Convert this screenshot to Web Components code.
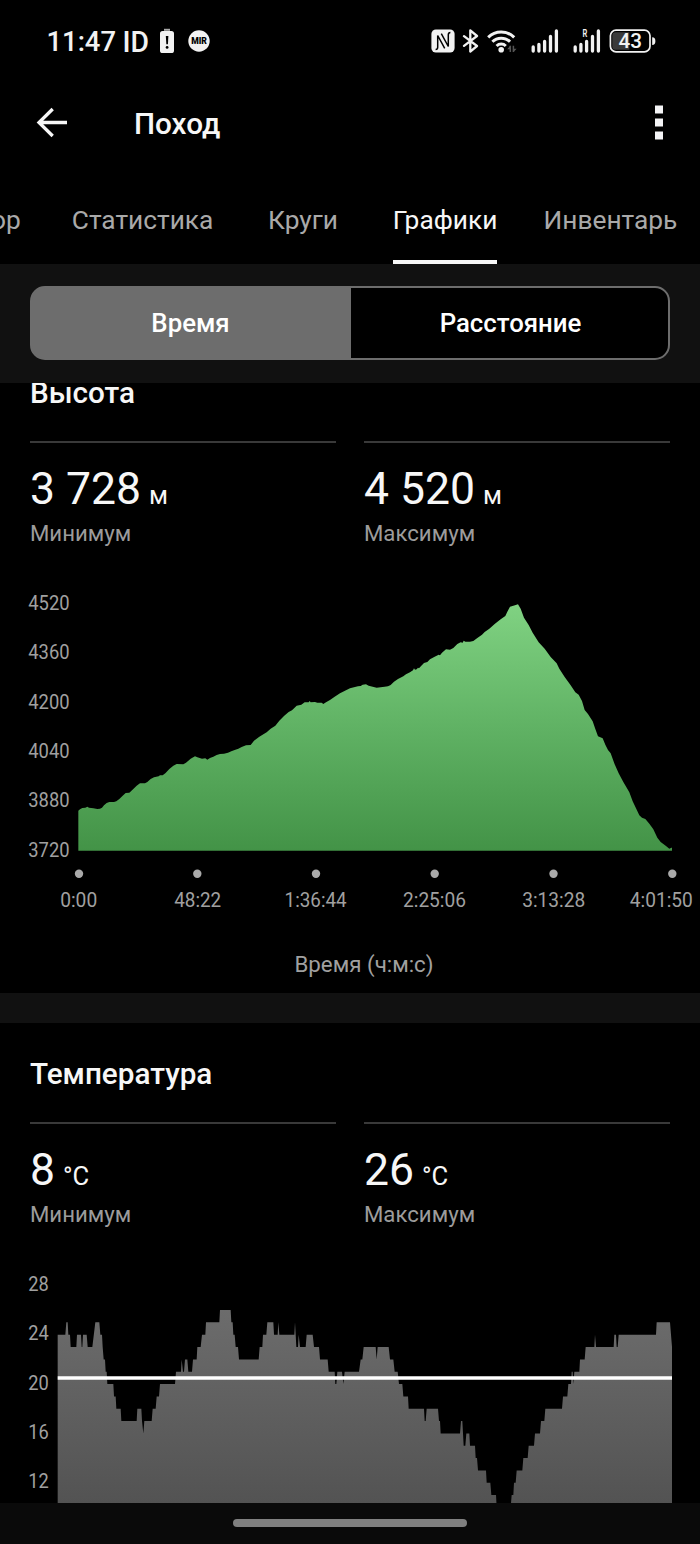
<!DOCTYPE html>
<html lang="ru">
<head>
<meta charset="utf-8">
<title>Поход</title>
<style>
html, body{ margin:0; background:#000; }
body{ font-family:Roboto, "Noto Sans", sans-serif; color:#f7f7f7; }
</style>
</head>
<body>
<hike-app></hike-app>

<script>
const ICONS = {
  alert: [16, 26, `<path d="M5 0.8h6v2H5z" fill="#aaa"/><rect x="1" y="3" width="14" height="22" rx="2.6" fill="#f2f2f2"/><path d="M6.800 8h2.600l-.5 8.300H7.300z"/><circle cx="8.100" cy="19.400" r="1.400"/>`],
  mir: [22, 22, `<circle cx="11" cy="11" r="10.7" fill="#f2f2f2"/><text x="3.200" y="14" font-family="Roboto,sans-serif" font-size="8.600" font-weight="900" textLength="15.800" lengthAdjust="spacingAndGlyphs" fill="#000">MIR</text>`],
  nfc: [24, 24, `<rect x=".4" y=".4" width="23.2" height="23.2" rx="4.500" fill="#f2f2f2"/><path d="M4.600 20.500c1.500 0 2.100-.8 2.100-2.300V6.500l7 12.800M19.400 3.500c-1.500 0-2.100.8-2.100 2.300v11.700L10.300 4.700" fill="none" stroke="#000" stroke-width="1.500"/>`],
  bluetooth: [18, 24, `<path d="M2 7.200 15 17l-6.700 5.600V1.400L15 7 2 16.800" fill="none" stroke="#f2f2f2" stroke-width="2.300" stroke-linejoin="round" stroke-linecap="round"/>`],
  wifi: [30, 24, `<g fill="none" stroke="#f2f2f2" stroke-width="3"><path d="M1.200 8.400a18.300 18.300 0 0 1 26 0"/><path d="M5.400 12.800a12.400 12.400 0 0 1 17.600 0"/><path d="M9.600 17a6.500 6.500 0 0 1 9.200 0"/></g><circle cx="14.200" cy="20.800" r="2.800" fill="#f2f2f2"/><path d="M23.300 16.800v6.200M26.400 23v-6.200" stroke="#555" stroke-width="1.500"/><path d="M20.200 20.200l3.100-3.600v3.600zM26.400 23.200v-3.400h3.200z" fill="#555"/>`],
  signal: [28, 24, `<path d="M2.200 22v-4M7.900 22v-6.500M13.600 22v-9.500M19.500 22V7.500M25.400 22V2" stroke="#f2f2f2" stroke-width="3.300" stroke-linecap="round"/>`],
  roaming: [28, 24, `<path d="M2.200 22v-4M7.900 22v-6.500M13.600 22v-9.500M19.500 22V7.500M25.400 22V2" stroke="#f2f2f2" stroke-width="3.300" stroke-linecap="round"/><text x="9.500" y="7.500" font-family="Roboto,sans-serif" font-size="10" font-weight="600" textLength="4.800" lengthAdjust="spacingAndGlyphs" fill="#f2f2f2">R</text>`],
  battery: [48, 24, `<rect x="1.400" y="1.200" width="39.600" height="21.600" rx="5.600" fill="none" stroke="#f2f2f2" stroke-width="1.700"/><path d="M6.500 3.200h13.800v17.600H6.500a3.200 3.200 0 0 1-3.200-3.200V6.400a3.200 3.200 0 0 1 3.200-3.200z" fill="#3a3a3a"/><path d="M43.200 8.200c2.200 0 3.200 1.200 3.200 3.900s-1 3.900-3.200 3.900z" fill="#f2f2f2"/><text x="9.600" y="19.200" font-family="Roboto,sans-serif" font-size="20.500" font-weight="500" textLength="23.500" lengthAdjust="spacingAndGlyphs" fill="#f2f2f2">43</text>`],
  back: [32, 32, `<path d="M31 15.500H3.500M16.700 2 3 15.500l13.700 13.500" fill="none" stroke="#f7f7f7" stroke-width="3.300"/>`],
  more: [8, 36, `<path d="M0 .5h8v8H0zM0 13.500h8v8H0zM0 26.500h8v8H0z" fill="#f4f4f6"/>`]
};

customElements.define("app-icon", class extends HTMLElement {
  constructor(){
    super();
    this.attachShadow({mode:"open"});
  }
  connectedCallback(){
    const [w, h, body] = ICONS[this.getAttribute("name")];
    this.shadowRoot.innerHTML = `
    <style>
      :host{ display:block; flex:none; }
      svg{ display:block; }
    </style>
    <svg width="${w}" height="${h}" viewBox="0 0 ${w} ${h}">${body}</svg>`;
  }
});

customElements.define("status-bar", class extends HTMLElement {
  constructor(){
    super();
    this.attachShadow({mode:"open"}).innerHTML = `
    <style>
      :host{ display:flex; align-items:center; justify-content:space-between; height:81px; box-sizing:border-box; padding:0 43px 0 46px; }
      div{ display:flex; align-items:center; }
      svg{ display:block; }
    </style>
    <div>
      <svg width="104" height="40" font-family="Roboto,sans-serif" fill="#f2f2f2">
        <text x=".5" y="29.500" font-size="27.500" font-weight="500" textLength="69.500" lengthAdjust="spacingAndGlyphs">11:47</text>
        <text x="76.500" y="30.500" font-size="29.500" font-weight="500" textLength="26.500" lengthAdjust="spacingAndGlyphs">ID</text>
      </svg>
      <app-icon name="alert" style="margin-left:8.500px"></app-icon>
      <app-icon name="mir" style="margin-left:13px"></app-icon>
    </div>
    <div>
      <app-icon name="nfc"></app-icon>
      <app-icon name="bluetooth" style="margin-left:6.500px"></app-icon>
      <app-icon name="wifi" style="margin-left:7px"></app-icon>
      <app-icon name="signal" style="margin-left:14px"></app-icon>
      <app-icon name="roaming" style="margin-left:14px"></app-icon>
      <app-icon name="battery" style="margin-left:8.500px"></app-icon>
    </div>`;
  }
});

customElements.define("app-bar", class extends HTMLElement {
  constructor(){
    super();
    this.attachShadow({mode:"open"}).innerHTML = `
    <style>
      :host{ display:flex; align-items:center; height:83px; box-sizing:border-box; padding:0 37px 0 36px; }
      h1{ flex:1; margin:3px 0 0 66px; font-size:29.700px; font-weight:500; line-height:36px; }
    </style>
    <app-icon name="back"></app-icon>
    <h1><slot></slot></h1>
    <app-icon name="more"></app-icon>`;
  }
});

customElements.define("tab-item", class extends HTMLElement {
  constructor(){
    super();
    this.attachShadow({mode:"open"}).innerHTML = `
    <style>
      :host{ display:flex; flex:none; align-items:flex-start; box-sizing:border-box; height:99.500px; padding-top:38.500px; font-size:26.300px; line-height:34px; color:#a9a9a9; border-bottom:4.500px solid transparent; white-space:nowrap; }
      :host([active]){ color:#f7f7f7; border-color:#f7f7f7; }
    </style>
    <slot></slot>`;
  }
});

customElements.define("tab-strip", class extends HTMLElement {
  constructor(){
    super();
    this.attachShadow({mode:"open"}).innerHTML = `
    <style>
      :host{ display:flex; overflow:hidden; height:99.500px; }
      div{ display:flex; flex:none; margin-left:-55px; }
      ::slotted(*){ margin-right:54.700px; }
      ::slotted(:first-child){ margin-right:51px; }
      ::slotted([active]){ margin-right:46.200px; }
    </style>
    <div><slot></slot></div>`;
  }
});

customElements.define("segment-switch", class extends HTMLElement {
  constructor(){
    super();
    this.attachShadow({mode:"open"}).innerHTML = `
    <style>
      :host{ display:block; position:relative; z-index:1; box-sizing:border-box; height:119px; padding:22.500px 30px; background:#111; }
      div{ display:grid; grid-template-columns:319px 1fr; height:74px; box-sizing:border-box; border:2px solid #6d6d6d; border-radius:15px; overflow:hidden; background:linear-gradient(90deg, #6d6d6d 319px, #000 0); }
      span{ display:flex; align-items:center; justify-content:center; font-size:25.800px; font-weight:500; color:#fff; }
      span:first-child{ padding-right:2px; }
      span:last-child{ padding-left:2px; }
    </style>
    <div><span>${this.getAttribute("left")}</span><span>${this.getAttribute("right")}</span></div>`;
  }
});

customElements.define("stat-value", class extends HTMLElement {
  constructor(){
    super();
    this.attachShadow({mode:"open"});
  }
  connectedCallback(){
    this.shadowRoot.innerHTML = `
    <style>
      :host{ display:block; border-top:2px solid #393939; }
      .value{ margin-top:20px; font-size:44.500px; line-height:53px; white-space:pre; }
      .unit{ font-size:25.600px; margin-left:8px; }
      .label{ margin-top:-4.500px; font-size:22.200px; line-height:30px; color:#9c9c9c; }
    </style>
    <div class="value">${this.getAttribute("value")}<span class="unit">${this.getAttribute("unit")}</span></div>
    <div class="label"><slot></slot></div>`;
  }
});

customElements.define("chart-section", class extends HTMLElement {
  constructor(){
    super();
    this.attachShadow({mode:"open"}).innerHTML = `
    <style>
      :host{ display:flex; flex-direction:column; box-sizing:border-box; height:651px; background:#000; }
      h2{ margin:33px 30px 0; font-size:29.700px; line-height:36px; font-weight:500; }
      .stats{ display:grid; grid-template-columns:1fr 1fr; gap:28px; margin:30px 30px 0; height:131px; }
    </style>
    <h2>${this.getAttribute("heading")}</h2>
    <div class="stats"><slot name="stat"></slot></div>
    <slot></slot>`;
  }
});

// vertical axis labels, evenly spaced
const yAxis = (labels, width, y) => labels.map((t, i) =>
  `<text x="28.300" y="${y + i * 49.33}" textLength="${width}" lengthAdjust="spacingAndGlyphs">${t}</text>`).join("");

const CHART_STYLE = `
  :host{ display:block; }
  svg{ display:block; }
  text{ font-family:Roboto, sans-serif; font-size:20.300px; fill:#a0a0a0; }
  .title{ font-size:22.300px; text-anchor:middle; }
`;

// profile outline on a grid of thirds of a pixel
const PROFILE = `235,692 240,688 247,684 256,683 262,680 267,683 280,685 292,687 300,686 306,683 312,676 320,669 328,666 342,666 349,664 358,657 368,647 377,639 388,638 396,631 410,617 420,610 435,610 442,606 452,597 462,592 476,589 480,586 488,586 496,580 508,567 520,557 530,552 550,553 558,548 572,536 585,529 592,532 606,536 616,535 622,539 630,534 640,530 650,525 660,522 672,521 684,518 694,514 704,510 715,506 725,501 738,496 752,495 762,482 778,470 800,457 812,446 826,437 838,422 852,408 866,396 876,391 890,377 904,374 914,367 926,367 929,363 932,367 945,366 952,368 965,368 970,372 978,367 990,360 1004,350 1020,340 1035,332 1050,325
1062,322 1074,319 1082,318 1088,314 1098,313 1106,317 1118,320 1130,323 1142,322 1154,320 1164,319 1172,315 1182,305 1194,297 1210,289 1218,283 1230,277 1239,271 1242,265 1245,269 1250,268 1254,263 1257,265 1264,257 1272,249 1282,246 1290,238 1304,230 1316,224 1320,226 1326,218 1338,208 1350,209 1360,204 1372,192 1382,187 1388,188 1391,182 1396,185 1410,185 1420,183 1432,174 1446,164 1454,156 1468,146 1484,132 1502,118 1516,108 1522,95 1530,80 1545,76 1554,73 1562,86 1572,113 1586,135 1598,158 1616,187 1634,206 1652,231 1670,250 1678,266 1694,291 1712,316 1726,337 1736,344 1746,363 1754,390 1764,402 1778,424 1786,447 1794,469 1808,475 1816,494 1824,510 1832,520 1844,553 1856,580 1870,606 1888,637 1898,664 1918,706 1926,713 1936,717 1948,731 1960,748 1972,773 1982,786 1998,798 2008,806 2014,803 2016,803`;

customElements.define("altitude-chart", class extends HTMLElement {
  constructor(){
    super();
    const ticks = [[79, 37, "0:00"], [197.3, 47, "48:22"], [316, 62, "1:36:44"], [434.7, 63, "2:25:06"], [553.5, 63, "3:13:28"], [672.3, 63, "4:01:50"]];
    // the last label is pushed in from the right edge
    const labelX = [60.2, 174.2, 284.6, 403, 522.2, 629.8];
    this.attachShadow({mode:"open"}).innerHTML = `
    <style>${CHART_STYLE}</style>
    <svg width="700" height="421" viewBox="0 572 700 421">
      <defs><linearGradient id="g" x1="0" y1="0" x2="0" y2="1">
        <stop offset="0" stop-color="#80d282"/><stop offset=".5" stop-color="#60b264"/><stop offset="1" stop-color="#439347"/>
      </linearGradient></defs>
      ${yAxis([4520, 4360, 4200, 4040, 3880, 3720], 41.3, 610)}
      <polygon transform="translate(0 580) scale(.33333)" fill="url(#g)" points="235,812 ${PROFILE} 2016,812"/>
      ${ticks.map(([x, w, t], i) => `
        <circle cx="${x}" cy="873.800" r="4.200" fill="#aaa"/>
        <text x="${labelX[i]}" y="907.200" textLength="${w}" lengthAdjust="spacingAndGlyphs">${t}</text>`).join("")}
      <text class="title" x="364" y="972">Время (ч:м:с)</text>
    </svg>`;
  }
});

// x in thirds of a pixel, whole degrees
const TEMPS = `173,24 196,24 199,25 203,25 205,24 210,24 212,23 229,23 231,24 243,24 245,23 247,23 249,24 260,24 263,23 277,23 286,25 298,25 301,24 306,24 308,23 311,22 315,22 317,21 320,21 322,20 340,20 342,19 347,19 349,18 362,18 364,17 410,17 412,18 424,18 426,17 430,16 433,17 455,17 458,18 467,18 470,19 477,19 480,20 525,20 528,21 543,21 545,22 549,21 552,21 555,22 562,22 565,21 576,21 579,22 590,22 592,23 602,23 606,24 616,24 618,25 658,25 660,26 692,26 694,25 698,25 700,24 704,24 707,23 714,23 717,22 776,22 779,23 787,23 789,24 799,24 802,25 820,25 822,24 833,24 835,25 838,24 883,24 885,25 889,23 894,23 896,24 900,23 917,23 920,24 938,24 942,23 957,23 960,22 983,22 986,21 1004,21 1006,20 1009,20 1012,21 1026,21 1030,20 1034,21
1077,21 1082,22 1087,22 1091,23 1127,23 1130,22 1133,23 1166,23 1170,22 1180,22 1184,21 1193,21 1197,20 1207,20 1210,19 1224,19 1226,18 1272,18 1274,17 1277,17 1280,18 1314,18 1317,17 1320,17 1322,16 1380,16 1383,17 1387,17 1389,16 1391,15 1396,15 1399,16 1408,16 1410,15 1425,15 1427,14 1431,14 1434,13 1458,13 1460,12 1471,12 1474,11 1488,11 1490,10 1532,10 1535,11 1540,11 1542,12 1547,12 1550,13 1567,13 1570,14 1583,14 1586,15 1602,15 1605,16 1620,16 1623,17 1633,17 1636,18 1686,18 1689,19 1702,19 1705,20 1713,20 1715,21 1718,21 1720,20 1723,21 1738,21 1740,22 1754,22 1757,23 1783,23 1785,24 1788,23 1841,23 1843,24 1848,24 1850,23 1853,23 1856,24 1968,24 1970,25 2010,25 2013,24 2016,23`;

customElements.define("temperature-chart", class extends HTMLElement {
  constructor(){
    super();
    const points = TEMPS.split(/\s+/).map(p => {
      const [x, t] = p.split(",");
      return `${(x / 3).toFixed(2)},${(1334.7 + (24 - t) * 12.34).toFixed(2)}`;
    }).join(" ");
    this.attachShadow({mode:"open"}).innerHTML = `
    <style>${CHART_STYLE}</style>
    <svg width="700" height="421" viewBox="0 1253 700 421">
      <defs><linearGradient id="g" x1="0" y1="1310" x2="0" y2="1503" gradientUnits="userSpaceOnUse">
        <stop offset="0" stop-color="#6c6c6c"/><stop offset="1" stop-color="#535353"/>
      </linearGradient></defs>
      ${yAxis([28, 24, 20, 16, 12], 20.5, 1291)}
      <polygon fill="url(#g)" points="57.700,1532 ${points} 672,1532"/>
      <path d="M57.700 1378H672" stroke="#fff" stroke-width="3.300"/>
    </svg>`;
  }
});

customElements.define("gesture-bar", class extends HTMLElement {
  constructor(){
    super();
    this.attachShadow({mode:"open"}).innerHTML = `
    <style>
      :host{ display:flex; justify-content:center; align-items:center; background:#0a0a0a; }
      i{ width:234px; height:8px; border-radius:4px; background:#808080; }
    </style>
    <i></i>`;
  }
});

customElements.define("hike-app", class extends HTMLElement {
  constructor(){
    super();
    this.attachShadow({mode:"open"}).innerHTML = `
    <style>
      :host{ display:flex; flex-direction:column; width:700px; height:1544px; overflow:hidden; background:#000; }
      main{ height:1120px; overflow:hidden; flex:none; }
      .first{ margin-top:-40.500px; }
      hr{ margin:0; border:0; height:30px; background:#111; }
      gesture-bar{ height:41.500px; flex:none; }
    </style>
    <status-bar></status-bar>
    <app-bar>Поход</app-bar>
    <tab-strip>
      <tab-item>Обзор</tab-item>
      <tab-item>Статистика</tab-item>
      <tab-item>Круги</tab-item>
      <tab-item active>Графики</tab-item>
      <tab-item>Инвентарь</tab-item>
    </tab-strip>
    <segment-switch left="Время" right="Расстояние"></segment-switch>
    <main>
      <chart-section class="first" heading="Высота">
        <stat-value slot="stat" value="3 728" unit="м">Минимум</stat-value>
        <stat-value slot="stat" value="4 520" unit="м">Максимум</stat-value>
        <altitude-chart></altitude-chart>
      </chart-section>
      <hr>
      <chart-section heading="Температура">
        <stat-value slot="stat" value="8" unit="°C">Минимум</stat-value>
        <stat-value slot="stat" value="26" unit="°C">Максимум</stat-value>
        <temperature-chart></temperature-chart>
      </chart-section>
    </main>
    <gesture-bar></gesture-bar>`;
  }
});
</script>
</body>
</html>
